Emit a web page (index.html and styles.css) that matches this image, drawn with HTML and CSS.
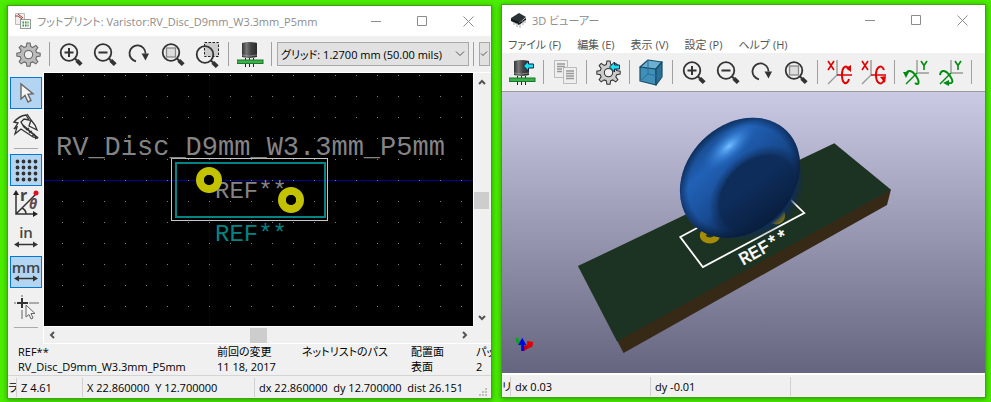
FILE: index.html
```html
<!DOCTYPE html>
<html lang="ja">
<head>
<meta charset="utf-8">
<meta name="viewport" content="width=device-width, initial-scale=1">
<title>フットプリント: Varistor</title>
<link rel="stylesheet" href="styles.css">
</head>
<body>
<svg class="defs" aria-hidden="true">
  <defs>
    <linearGradient id="can" x1="0" x2="1" y1="0" y2="0">
      <stop offset="0" stop-color="#333"/><stop offset=".3" stop-color="#777"/><stop offset=".6" stop-color="#444"/><stop offset="1" stop-color="#2b2b2b"/>
    </linearGradient>
  </defs>
  <symbol id="lens" viewBox="0 0 27 27">
    <circle cx="11" cy="11.500" r="8.300" fill="none" stroke="#333" stroke-width="1.800"/>
    <path d="M17 17.500l2 2" stroke="#333" stroke-width="2"/>
    <path d="M18.800 19.300l4.400 4.400" stroke="#333" stroke-width="4"/>
  </symbol>
  <symbol id="zoom-in" viewBox="0 0 27 27"><use href="#lens"/><path d="M11 7v9M6.500 11.500h9" stroke="#333" stroke-width="2"/></symbol>
  <symbol id="zoom-out" viewBox="0 0 27 27"><use href="#lens"/><path d="M6.500 11.500h9" stroke="#333" stroke-width="2"/></symbol>
  <symbol id="zoom-fit" viewBox="0 0 27 27"><use href="#lens"/><rect x="6.500" y="7" width="9" height="9" fill="#ddd" stroke="#888" stroke-width="1.300"/></symbol>
  <symbol id="zoom-area" viewBox="0 0 27 27">
    <rect x="10.500" y="1.500" width="14" height="14" fill="#ccc" stroke="#222" stroke-dasharray="2.500 1.500"/><use href="#lens" y="2"/>
  </symbol>
  <symbol id="redraw" viewBox="0 0 27 27">
    <path d="M10 20.300A8 8 0 1 1 19.500 12.500" fill="none" stroke="#333" stroke-width="1.800"/><path d="M15.500 12.500h7.500l-3.500 7z" fill="#333"/>
  </symbol>
  <symbol id="gear" viewBox="0 0 24 24">
    <path d="M10.500 1h3l.7 3.400 2 .8L19 3.200 21 5.300l-2 2.800.8 2 3.400.6v2.800l-3.400.7-.8 2 2 2.800-2.100 2-2.800-1.900-2 .8-.6 3.300h-3l-.7-3.300-2-.8-2.800 1.900-2-2 1.900-2.800-.8-2L.8 13.500v-2.800l3.300-.6.8-2L3 5.300l2-2.100 2.800 2 2-.8z"/>
    <circle cx="12" cy="12.100" r="4" fill="#f0f0f0"/>
  </symbol>
  <symbol id="part" viewBox="0 0 27 27">
    <path d="M5 2q7.500-2 15 0v14q-7.500 2-15 0z" fill="url(#can)"/><path d="M5 14q7.500 2 15 0" fill="none" stroke="#aaa" stroke-width=".6"/>
    <path d="M8.500 17v9M16.500 17v9M12.500 17v9" stroke="#222" stroke-dasharray="5 1"/>
    <rect x="0" y="19" width="26" height="3.500" fill="#3fae4d" stroke="#147a25"/>
  </symbol>
  <symbol id="arrow-left" viewBox="0 0 12 12"><path d="M1 6l5-5v3h5v4H6v3z" fill="#16e3ee" stroke="#124" stroke-width="1"/></symbol>
  <symbol id="rot-x" viewBox="0 0 27 27">
    <path d="M11 1v15L2 25" fill="none" stroke="#999" stroke-width="1.400"/><path d="M11 16h15" stroke="#e00000" stroke-width="1.500"/>
    <path d="M2 2l6 9M8 2l-6 9" stroke="#e00000" stroke-width="1.600"/>
  </symbol>
  <symbol id="rot-y" viewBox="0 0 27 27">
    <path d="M14 1v13h12" fill="none" stroke="#999" stroke-width="1.400"/><path d="M14 14L3 25" stroke="#008c10" stroke-width="1.500"/>
    <path d="M18 2l3 4.500L24 2M21 6v5" fill="none" stroke="#008c10" stroke-width="1.600"/>
  </symbol>
</svg>

<main class="desktop">
  <section class="window window-editor" aria-label="フットプリント">
    <header class="titlebar">
      <svg class="app-icon" viewBox="0 0 16 16"><path d="M.5.500h9v11h-9z" fill="#eee" stroke="#bbb"/><path d="M0 3h3l4 3M3 1l5 4" stroke="#a33" fill="none"/><rect x="5.500" y="6.500" width="10" height="9" fill="#f5f5f5" stroke="#999"/><path d="M7.500 9.500h6M7.500 12.500h6" stroke="#2c9a3c" stroke-width="2" stroke-dasharray="1.500 1"/></svg>
      <h1>フットプリント: Varistor:RV_Disc_D9mm_W3.3mm_P5mm</h1>
      <div class="window-controls">
        <button aria-label="最小化"><svg viewBox="0 0 11 11"><path d="M0 5.500h10"/></svg></button>
        <button aria-label="最大化"><svg viewBox="0 0 11 11"><path d="M.5.500h9v9h-9z"/></svg></button>
        <button aria-label="閉じる"><svg viewBox="0 0 11 11"><path d="M.5.500l10 10M10.500.500l-10 10"/></svg></button>
      </div>
    </header>
    <div class="toolbar">
      <button class="tool" aria-label="設定"><svg viewBox="0 0 27 27"><use href="#gear" x="1" y="1" width="25" height="25" fill="#bbb" stroke="#666"/></svg></button>
      <i class="sep"></i>
      <button class="tool" aria-label="拡大"><svg><use href="#zoom-in"/></svg></button>
      <button class="tool" aria-label="縮小"><svg><use href="#zoom-out"/></svg></button>
      <button class="tool" aria-label="再描画"><svg><use href="#redraw"/></svg></button>
      <button class="tool" aria-label="全体表示"><svg><use href="#zoom-fit"/></svg></button>
      <button class="tool" aria-label="範囲拡大"><svg><use href="#zoom-area"/></svg></button>
      <i class="sep"></i>
      <button class="tool" aria-label="3D 表示"><svg><use href="#part"/></svg></button>
      <i class="sep"></i>
      <div class="grid-controls">
        <div class="picker">
          <select aria-label="グリッド"><option>グリッド: 1.2700 mm (50.00 mils)</option></select>
          <svg viewBox="0 0 10 6"><path d="M1 .500l4 4 4-4"/></svg>
        </div>
        <i class="sep"></i>
        <div class="picker picker-small">
          <select aria-label="ズーム"><option></option></select>
          <svg viewBox="0 0 10 6"><path d="M3 2.500l2 2 4-4"/></svg>
        </div>
      </div>
    </div>
    <div class="workspace">
      <nav class="side-tools">
        <button class="side-tool active" aria-label="選択"><svg viewBox="0 0 30 30"><path d="M10 6v15l4-3.500 3 6.500 3-1.500-3-6.200 5-.5z" fill="#f4f4f4" stroke="#666" stroke-width="1.400"/></svg></button>
        <button class="side-tool" aria-label="計測"><svg viewBox="0 0 30 30"><g fill="#f2f2f2" stroke="#333" stroke-width="1.300"><path d="M3 10Q8 4 15 3l3 5-5-1-3 3 3 5 14 11-5-1L10 17l-6 5 2-7-3 2 4-6z"/><path d="M16 2l4 6-2 6 8 4-2-5-4-5z"/></g><path d="M12 13l15 13M15 18l3-2M18 21l3-2M21 24l3-2M24 27l3-2" stroke="#333" fill="none" stroke-width="1.200"/></svg></button>
        <i class="side-sep"></i>
        <button class="side-tool active" aria-label="グリッド表示"><svg viewBox="0 0 30 30"><path d="M6.500 6.500h20M6.500 12.500h20M6.500 18.500h20M6.500 24.500h20" stroke="#333" stroke-width="3.800" stroke-linecap="round" stroke-dasharray="0 6"/></svg></button>
        <button class="side-tool" aria-label="極座標"><svg viewBox="0 0 30 30"><path d="M5 4v21h18M5 25L25 5M11 19q4 2 4 6" fill="none" stroke="#333" stroke-width="1.500"/><path d="M2 6l3-5 3 5zM22 22l5 3-5 3z" fill="#222"/><circle cx="25" cy="4" r="2.500" fill="#e01020"/><text x="9" y="12" class="glyph glyph-r">r</text><text x="18" y="20" class="glyph glyph-theta">θ</text></svg></button>
        <button class="side-tool" aria-label="インチ"><svg viewBox="0 0 30 30"><text x="15" y="15" class="glyph unit">in</text><path d="M6 21.500h18" stroke="#333" stroke-width="1.500"/><path d="M8 18.500l-5 3 5 3zM22 18.500l5 3-5 3z" fill="#333"/></svg></button>
        <button class="side-tool active" aria-label="ミリメートル"><svg viewBox="0 0 30 30"><text x="15" y="16" class="glyph unit">mm</text><path d="M6 21.500h18" stroke="#333" stroke-width="1.500"/><path d="M8 18.500l-5 3 5 3zM22 18.500l5 3-5 3z" fill="#333"/></svg></button>
        <button class="side-tool" aria-label="カーソル形状"><svg viewBox="0 0 30 30"><path d="M3 12h2M18 12h10M11 4v2M11 19v9" stroke="#aaa" stroke-width="2"/><path d="M6 12h11M11 7v10" stroke="#333" stroke-width="2"/><path d="M15 14v12l3-2.500 2 4.500 2-1-2-4.500h4z" fill="#f5f5f5" stroke="#666"/></svg></button>
        <i class="side-sep"></i>
      </nav>
      <div class="view">
        <svg class="board" viewBox="0 0 429 253" preserveAspectRatio="xMidYMid slice">
          <defs><pattern id="dots" x="18" y="2" width="21" height="21" patternUnits="userSpaceOnUse"><rect width="1" height="1" fill="#848484"/></pattern></defs>
          <rect width="429" height="253" fill="#000"/>
          <g shape-rendering="crispEdges">
            <path d="M165.500 0v253" stroke="#00003c"/><path d="M0 107.500h429" stroke="#000090"/>
            <rect width="429" height="253" fill="url(#dots)"/>
            <rect x="127.500" y="85.500" width="156" height="62" fill="none" stroke="#c8c8c8"/>
            <rect x="132" y="90" width="149" height="54" fill="none" stroke="#008484" stroke-width="2"/>
          </g>
          <text x="12" y="82" class="pcb-name">RV_Disc_D9mm_W3.3mm_P5mm</text>
          <text x="171" y="125" class="pcb-ref">REF**</text>
          <text x="171" y="168" class="pcb-ref fab">REF**</text>
          <circle cx="165" cy="107" r="9" fill="none" stroke="#c2c200" stroke-width="8"/><circle cx="165" cy="107" r="5" fill="#000"/>
          <circle cx="247" cy="127" r="9" fill="none" stroke="#c2c200" stroke-width="8"/><circle cx="247" cy="127" r="5" fill="#000"/>
        </svg>
        <div class="scroll scroll-v"><svg viewBox="0 0 8 6"><path d="M1 5l3-3 3 3"/></svg><i class="thumb"></i><svg viewBox="0 0 8 6"><path d="M1 1l3 3 3-3"/></svg></div>
        <div class="scroll scroll-h"><svg viewBox="0 0 6 8"><path d="M5 1L2 4l3 3"/></svg><i class="thumb"></i><svg viewBox="0 0 6 8"><path d="M1 1l3 3-3 3"/></svg></div>
      </div>
    </div>
    <dl class="info">
      <div><dt>REF**</dt><dd>RV_Disc_D9mm_W3.3mm_P5mm</dd></div>
      <div><dt>前回の変更</dt><dd>11 18, 2017</dd></div>
      <div><dt>ネットリストのパス</dt><dd></dd></div>
      <div><dt>配置面</dt><dd>表面</dd></div>
      <div><dt>パッ</dt><dd>2</dd></div>
    </dl>
    <footer class="status status-editor">
      <span>ラ</span><span>Z 4.61</span><span>X 22.860000&nbsp; Y 12.700000</span><span>dx 22.860000&nbsp; dy 12.700000&nbsp; dist 26.151</span>
      <svg class="grip" viewBox="0 0 9 9"><path d="M6 0h2v2H6zM3 3h2v2H3zM6 3h2v2H6zM0 6h2v2H0zM3 6h2v2H3zM6 6h2v2H6z" fill="#bfbfbf"/></svg>
    </footer>
  </section>

  <section class="window window-viewer" aria-label="3D ビューアー">
    <header class="titlebar">
      <svg class="app-icon" viewBox="0 0 16 16"><path d="M1 6l8-5 7 4-7 6z" fill="#2b3338"/><path d="M1 6v3l8 4V10zM9 11l7-5v2l-7 5z" fill="#15191c"/><path d="M4 10v3M7 11v4M10 12v4M13 9v4M15 8v3" stroke="#aaa"/></svg>
      <h1>3D ビューアー</h1>
      <div class="window-controls">
        <button aria-label="最小化"><svg viewBox="0 0 11 11"><path d="M0 5.500h10"/></svg></button>
        <button aria-label="最大化"><svg viewBox="0 0 11 11"><path d="M.5.500h9v9h-9z"/></svg></button>
        <button aria-label="閉じる"><svg viewBox="0 0 11 11"><path d="M.5.500l10 10M10.500.500l-10 10"/></svg></button>
      </div>
    </header>
    <nav class="menubar">
      <button>ファイル (F)</button><button>編集 (E)</button><button>表示 (V)</button><button>設定 (P)</button><button>ヘルプ (H)</button>
    </nav>
    <div class="toolbar">
      <button class="tool" aria-label="再読み込み"><svg viewBox="0 0 27 27"><use href="#part"/><use href="#arrow-left" x="13" y="1" width="13" height="12"/></svg></button>
      <i class="sep"></i>
      <button class="tool" aria-label="コピー"><svg viewBox="0 0 27 27"><g fill="#eee" stroke="#bbb"><path d="M2.500 1.500h13v17h-13z"/><path d="M11.500 8.500h13v16h-13z"/></g><path d="M5 5h8M5 7.500h8M5 10h5M5 12.500h5M14 12h8M14 14.500h8M14 17h8M14 19.500h8" stroke="#999" stroke-width="1.300"/></svg></button>
      <i class="sep"></i>
      <button class="tool" aria-label="設定"><svg viewBox="0 0 27 27"><use href="#gear" x="1" y="1" width="25" height="25" fill="#ccc" stroke="#333"/><use href="#arrow-left" x="13" y="2" width="13" height="12"/></svg></button>
      <i class="sep"></i>
      <button class="tool" aria-label="レンダリング"><svg viewBox="0 0 27 27"><g stroke="#174c66" stroke-width="1.200" stroke-linejoin="round"><path d="M2 8l16 2v16L2 22z" fill="#3f8fb8"/><path d="M2 8l8-7 14 2-6 7z" fill="#69b0d2"/><path d="M18 10l6-7v15l-6 8z" fill="#2a7199"/></g><path d="M10 1v14l14 3M10 15l-8 7" fill="none" stroke="#2a7199"/></svg></button>
      <i class="sep"></i>
      <button class="tool" aria-label="拡大"><svg><use href="#zoom-in"/></svg></button>
      <button class="tool" aria-label="縮小"><svg><use href="#zoom-out"/></svg></button>
      <button class="tool" aria-label="再描画"><svg><use href="#redraw"/></svg></button>
      <button class="tool" aria-label="全体表示"><svg><use href="#zoom-fit"/></svg></button>
      <i class="sep"></i>
      <button class="tool" aria-label="X 軸回転"><svg viewBox="0 0 27 27"><use href="#rot-x"/><path d="M23 20c-2 7-7 5-7-4s5-11 7-5" fill="none" stroke="#e00000" stroke-width="2"/><path d="M20 9l5-3v7z" fill="#e00000"/></svg></button>
      <button class="tool" aria-label="X 軸逆回転"><svg viewBox="0 0 27 27"><use href="#rot-x"/><path d="M24 11c-2-6-8-4-8 5s6 11 8 5" fill="none" stroke="#e00000" stroke-width="2"/><path d="M20 18l6-1-1 7z" fill="#e00000"/></svg></button>
      <i class="sep"></i>
      <button class="tool" aria-label="Y 軸回転"><svg viewBox="0 0 27 27"><use href="#rot-y"/><path d="M3 16c1-6 6-5 10 1s3 10-1 7" fill="none" stroke="#008c10" stroke-width="2"/><path d="M0 13h6l-3 6z" fill="#008c10"/></svg></button>
      <button class="tool" aria-label="Y 軸逆回転"><svg viewBox="0 0 27 27"><use href="#rot-y"/><path d="M3 16c1-6 6-5 10 1s3 8-3 7" fill="none" stroke="#008c10" stroke-width="2"/><path d="M12 21v6l-6-3z" fill="#008c10"/></svg></button>
      <i class="sep"></i>
    </div>
    <svg class="scene" viewBox="0 0 483 280" preserveAspectRatio="xMidYMid slice">
      <defs>
        <linearGradient id="disc" x1="0" y1="0" x2="0" y2="1"><stop offset="0" stop-color="#174887"/><stop offset=".22" stop-color="#2161b6"/><stop offset=".45" stop-color="#1b529e"/><stop offset=".75" stop-color="#143f7b"/><stop offset="1" stop-color="#0c2650"/></linearGradient>
        <radialGradient id="rim"><stop offset=".86" stop-color="#04122c" stop-opacity="0"/><stop offset="1" stop-color="#04122c" stop-opacity=".5"/></radialGradient>
        <radialGradient id="shine"><stop offset="0" stop-color="#74c0ff"/><stop offset=".35" stop-color="#4794e6" stop-opacity=".8"/><stop offset="1" stop-color="#2468c0" stop-opacity="0"/></radialGradient>
        <radialGradient id="face"><stop offset=".78" stop-color="#0e2d5b"/><stop offset=".84" stop-color="#0e2d5b" stop-opacity=".6"/><stop offset="1" stop-color="#0e2d5b" stop-opacity="0"/></radialGradient>
        <linearGradient id="shade" x1=".5" y1="0" x2=".3" y2="1"><stop offset=".6" stop-color="#06162f" stop-opacity="0"/><stop offset="1" stop-color="#06162f" stop-opacity=".7"/></linearGradient>
      </defs>
      <path d="M115.500 247.500L388.500 97l-4 15.500L122 260z" fill="#362916"/>
      <path d="M76.500 173.500L332 51l56.500 46.500L115.500 248.500z" fill="#1c3222"/>
      <g fill="none" stroke="#a48c08" stroke-width="6"><ellipse cx="208" cy="143" rx="7" ry="5"/><ellipse cx="274" cy="123" rx="6" ry="6"/></g>
      <path d="M271 112h7v10q-3 3-7 0z" fill="#777"/>
      <path d="M198 134l-19.500 10.500L201 174.500 302 120.500 285 104" fill="none" stroke="#fff" stroke-width="1.800"/>
      <g transform="rotate(-45 238 85.500)">
        <ellipse cx="238" cy="85.500" rx="66" ry="53" fill="url(#disc)"/>
        <ellipse cx="238" cy="85.500" rx="66" ry="53" fill="url(#rim)"/>
      </g>
      <ellipse cx="255" cy="101" rx="55" ry="40" fill="url(#face)" transform="rotate(-45 255 101)"/>
      <g transform="rotate(-45 238 85.500)"><ellipse cx="238" cy="85.500" rx="66" ry="53" fill="url(#shade)"/></g>
      <ellipse cx="227" cy="54" rx="33" ry="14" fill="url(#shine)" transform="rotate(-42 227 54)"/>
      <text class="silk" transform="translate(241 173) rotate(-29)">REF**</text>
      <path d="M21 253l-5-5v-3" fill="none" stroke="#0aa51c" stroke-width="3"/><path d="M22 256l7-4" stroke="#c00" stroke-width="4"/><path d="M26 248l6 1-1 5-5 1z" fill="#e00000"/><path d="M21 245l4 7h-2v6h-3v-6h-3z" fill="#0000e8"/>
    </svg>
    <footer class="status status-viewer">
      <span>リ</span><span>dx 0.03</span><span>dy -0.01</span><span></span>
    </footer>
  </section>
</main>
</body>
</html>
```
FILE: styles.css
```css
* { box-sizing: border-box; }

body {
  margin: 0;
  background: #4ced00;
  color: #000;
  font-family: "Open Sans", "Noto Sans CJK JP", sans-serif;
  font-size: 11px;
  line-height: 15px;
  font-feature-settings: "palt";
}

button, select {
  margin: 0;
  padding: 0;
  border: 0;
  background: none;
  color: inherit;
  font: inherit;
  font-feature-settings: inherit;
}

.defs { position: absolute; width: 0; height: 0; }

.desktop {
  display: grid;
  grid-template-columns: minmax(0, 1fr) minmax(0, 1fr);
  gap: 9px;
  min-height: 100vh;
  padding: 4px 5px 4px 7px;
}

.window {
  display: flex;
  flex-direction: column;
  overflow: hidden;
  border: 1px solid #43a316;
  background: #f0f0f0;
  box-shadow: 0 1px 5px rgba(0, 70, 0, 0.5);
}

.window-editor { margin-top: 1px; }
.window-viewer { margin-bottom: 1px; }

.titlebar {
  display: flex;
  align-items: center;
  height: 30px;
  padding-left: 7px;
  background: #fff;
  color: #8c8c8c;
}

.window-viewer .titlebar { padding-left: 8px; }

.app-icon { flex: none; width: 16px; height: 16px; margin-right: 6px; }

h1 {
  flex: 1;
  margin: 0;
  overflow: hidden;
  font-size: 11px;
  font-weight: 400;
  white-space: nowrap;
}

.window-controls { display: flex; }

.window-controls button {
  display: grid;
  place-items: center;
  width: 46px;
  height: 30px;
}

.window-controls svg {
  width: 11px;
  height: 11px;
  fill: none;
  stroke: #8c8c8c;
}

.menubar {
  display: flex;
  gap: 16px;
  height: 18px;
  padding-left: 6px;
  background: #fff;
  color: #555;
}

.menubar button { white-space: nowrap; }

.toolbar {
  display: flex;
  align-items: center;
  gap: 7px;
  height: 36px;
  padding-left: 7px;
}

.window-viewer .toolbar { height: 38px; }

.tool { flex: none; width: 27px; height: 27px; }
.tool svg { display: block; width: 27px; height: 27px; }

.sep {
  flex: none;
  width: 1px;
  height: 24px;
  margin-right: 1px;
  background: #a0a0a0;
}

.grid-controls {
  display: flex;
  flex: 1;
  gap: 4px;
  margin-left: -3px;
  padding-right: 1px;
}

.picker { position: relative; flex: 1; }

.picker select {
  width: 100%;
  height: 24px;
  padding: 0 3px;
  border: 1px solid #a9a9a9;
  border-radius: 0;
  appearance: none;
  background: #e1e1e1;
}

.picker svg {
  position: absolute;
  top: 9px;
  right: 4px;
  width: 10px;
  height: 6px;
  fill: none;
  stroke: #555;
}

.picker-small { flex: none; width: 11px; }
.picker-small svg { right: 2px; }

.workspace { display: flex; flex: 1; min-height: 0; }

.side-tools {
  display: flex;
  flex: none;
  flex-direction: column;
  align-items: center;
  gap: 2px;
  width: 35px;
  padding-top: 5px;
}

.side-tool {
  width: 32px;
  height: 32px;
  border: 1px solid transparent;
}

.side-tool.active { border-color: #0078d7; background: #b3d5f2; }
.side-tool svg { display: block; width: 30px; height: 30px; }
.side-sep { width: 24px; height: 1px; margin: 3px 0; background: #aaa; }

.glyph { font-family: "Open Sans", sans-serif; font-weight: 700; fill: #444; }
.glyph-r { font-size: 16px; }
.glyph-theta { font-size: 14px; font-style: italic; fill: #634848; }
.unit { font-size: 15px; font-weight: 600; text-anchor: middle; }

.view {
  display: grid;
  flex: 1;
  grid-template-columns: minmax(0, 1fr) 18px;
  grid-template-rows: minmax(0, 1fr) 17px;
  min-width: 0;
  border: solid #fff;
  border-width: 1px 0 1px 1px;
}

.board { display: block; width: 100%; height: 100%; }

.pcb-name, .pcb-ref, .silk { font-family: "Liberation Mono", monospace; }
.pcb-name { font-size: 27px; fill: #848484; }
.pcb-ref { font-size: 24px; fill: #848484; }
.fab { fill: #008484; }
.silk { font-size: 18px; fill: #fff; stroke: #fff; stroke-width: 0.5px; }

.scroll {
  display: flex;
  align-items: center;
  justify-content: space-between;
}

.scroll svg { fill: none; stroke: #555; stroke-width: 2px; }
.scroll-v { flex-direction: column; padding: 6px 2px 5px 0; border-left: 1px solid #fff; }
.scroll-v svg { width: 8px; height: 6px; }
.scroll-v .thumb { width: 15px; height: 17px; background: #cdcdcd; }
.scroll-h { padding: 0 5px; border-top: 1px solid #fff; }
.scroll-h svg { width: 6px; height: 8px; }
.scroll-h .thumb { width: 17px; height: 15px; background: #cdcdcd; }

.info {
  display: grid;
  grid-template-columns: 199fr 85fr 109fr 65fr 15fr;
  height: 32px;
  margin: 0;
  padding-left: 10px;
  overflow: hidden;
  border-bottom: 1px solid #d4d4d4;
  white-space: nowrap;
}

.info div { min-width: 0; }
.info dd { margin: 0; }

.status {
  display: grid;
  align-items: center;
  height: 22px;
  background: #f0f0f0;
}

.status-editor { grid-template-columns: 9px 66px 172px minmax(0, 1fr) 12px; }
.status-viewer { grid-template-columns: 9px 140px 140px minmax(0, 1fr); height: 24px; border-top: 2px solid #fff; }

.status span {
  height: 19px;
  padding-left: 4px;
  overflow: hidden;
  border-right: 1px solid #d0d0d0;
  line-height: 20px;
  white-space: nowrap;
}

.status span:first-child { padding-left: 0; }
.status span:nth-child(4) { border-right: 0; }
.grip { align-self: end; width: 9px; height: 9px; margin-bottom: 1px; }

.scene {
  display: block;
  flex: 1;
  width: 100%;
  min-height: 0;
  border-top: 1px solid #999;
  background: linear-gradient(#cbcae4, #666580);
}
```
